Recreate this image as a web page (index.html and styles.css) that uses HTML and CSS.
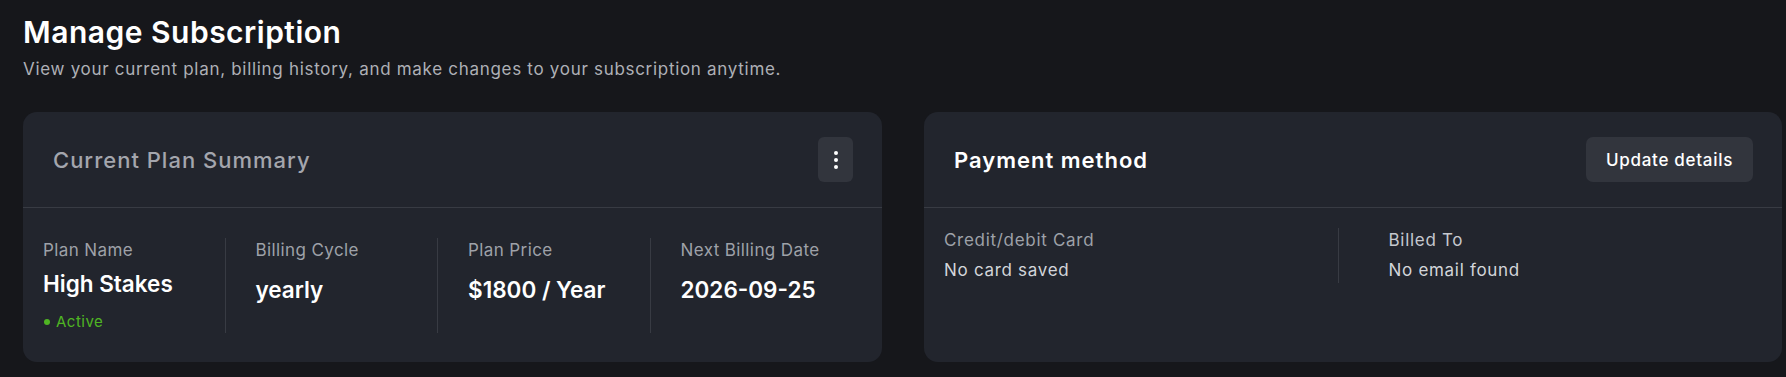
FILE: index.html
```html
<!DOCTYPE html>
<html lang="en">
<head>
<meta charset="utf-8">
<title>Manage Subscription</title>
<link rel="stylesheet" href="styles.css">
</head>
<body>
<main class="page">
  <h1 class="page-title">Manage Subscription</h1>
  <p class="page-sub">View your current plan, billing history, and make changes to your subscription anytime.</p>

  <div class="cards">
    <section class="card">
      <header class="card-head">
        <h2 class="card-title muted">Current Plan Summary</h2>
        <button class="icon-btn" aria-label="More options">
          <svg width="4" height="18" viewBox="0 0 4 18"><circle cx="2" cy="2" r="2" fill="#fff"/><circle cx="2" cy="9" r="2" fill="#fff"/><circle cx="2" cy="16" r="2" fill="#fff"/></svg>
        </button>
      </header>
      <div class="plan-body">
        <div class="stat">
          <div class="stat-label">Plan Name</div>
          <div class="stat-value first">High Stakes</div>
          <div class="status"><span class="status-dot"></span>Active</div>
        </div>
        <div class="stat">
          <div class="stat-label">Billing Cycle</div>
          <div class="stat-value">yearly</div>
        </div>
        <div class="stat">
          <div class="stat-label">Plan Price</div>
          <div class="stat-value">$1800 / Year</div>
        </div>
        <div class="stat">
          <div class="stat-label">Next Billing Date</div>
          <div class="stat-value">2026-09-25</div>
        </div>
      </div>
    </section>

    <section class="card">
      <header class="card-head">
        <h2 class="card-title">Payment method</h2>
        <button class="text-btn">Update details</button>
      </header>
      <div class="pay-body">
        <div class="pay-col left">
          <div class="pay-label">Credit/debit Card</div>
          <div class="pay-value">No card saved</div>
        </div>
        <div class="pay-col right">
          <div class="pay-label light">Billed To</div>
          <div class="pay-value">No email found</div>
        </div>
      </div>
    </section>
  </div>
</main>
</body>
</html>
```

FILE: styles.css
```css
* { box-sizing: border-box; }

html, body {
  margin: 0;
  background: #16171b;
}

body {
  font-family: Inter, "Noto Sans", "DejaVu Sans", sans-serif;
  color: #ffffff;
}

.page {
  padding: 14px 4px 0 23px;
}

.page-title {
  margin: 0;
  font-size: 30px;
  line-height: 36px;
  font-weight: 600;
  letter-spacing: 0.5px;
  color: #ffffff;
}

.page-sub {
  margin: 7px 0 0;
  font-size: 17px;
  line-height: 24px;
  letter-spacing: 0.7px;
  color: #aeb0b6;
}

.cards {
  margin-top: 31px;
  display: grid;
  grid-template-columns: 859px 858px;
  column-gap: 42px;
}

.card {
  background: #22252d;
  border-radius: 14px;
  height: 250px;
  display: flex;
  flex-direction: column;
}

.card-head {
  height: 96px;
  padding: 0 29px 0 30px;
  display: flex;
  align-items: center;
  justify-content: space-between;
  border-bottom: 1px solid #383b43;
}

.card-title {
  margin: 0;
  font-size: 22px;
  line-height: 28px;
  font-weight: 600;
  letter-spacing: 1px;
  color: #ffffff;
}

.card-title.muted {
  font-weight: 500;
  color: #a4a6ad;
}

.icon-btn {
  width: 35px;
  height: 45px;
  border: 0;
  border-radius: 6px;
  background: #32353d;
  display: flex;
  align-items: center;
  justify-content: center;
  padding: 0;
}

.text-btn {
  height: 45px;
  padding: 0 20px;
  border: 0;
  border-radius: 7px;
  background: #32353d;
  color: #ffffff;
  font-family: inherit;
  font-size: 17px;
  font-weight: 500;
  letter-spacing: 0.7px;
}

.plan-body {
  display: flex;
  padding: 30px 20px 28px;
}

.stat {
  flex: 1 1 0;
  padding: 0 30px;
  border-right: 1px solid #383b43;
  min-height: 95px;
}

.stat:first-child { padding-left: 0; }
.stat:last-child { border-right: 0; }

.stat-label {
  font-size: 17px;
  line-height: 24px;
  letter-spacing: 0.4px;
  color: #9ea1a8;
}

.stat-value {
  margin-top: 12px;
  font-size: 22.5px;
  line-height: 32px;
  font-weight: 600;
  color: #ffffff;
}

.stat-value.first { margin-top: 6px; }

.status {
  margin-top: 11px;
  display: flex;
  align-items: center;
  gap: 6px;
  font-size: 15px;
  line-height: 22px;
  letter-spacing: 0.5px;
  color: #4fb523;
}

.status-dot {
  width: 6px;
  height: 6px;
  border-radius: 50%;
  background: #4fb523;
  margin-left: 1px;
}

.pay-body {
  display: flex;
  padding: 20px 20px;
}

.pay-col {
  flex: 1 1 0;
  min-height: 55px;
}

.pay-col.left {
  padding-right: 20px;
  border-right: 1px solid #383b43;
}

.pay-col.right {
  padding-left: 50px;
}

.pay-label {
  font-size: 17px;
  line-height: 24px;
  letter-spacing: 0.7px;
  color: #9ea1a8;
}

.pay-label.light { color: #c6c8ce; }

.pay-value {
  margin-top: 6px;
  font-size: 17px;
  line-height: 24px;
  letter-spacing: 0.7px;
  color: #d3d5da;
}
```
